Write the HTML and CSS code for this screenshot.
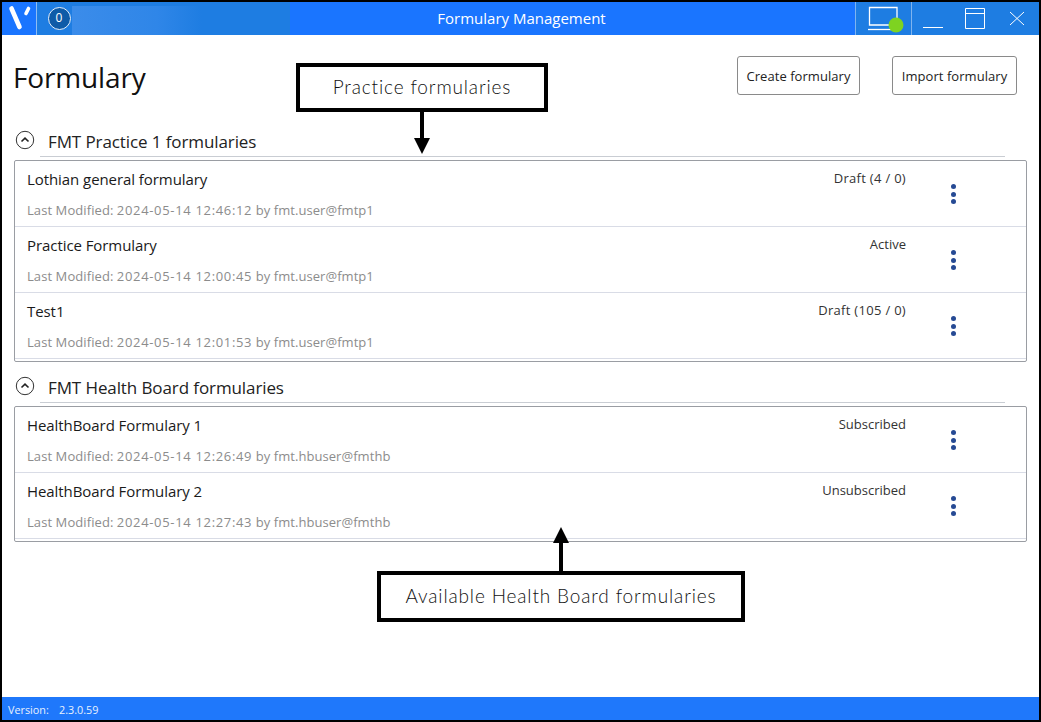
FILE: index.html
```html
<!DOCTYPE html>
<html lang="en">
<head>
<meta charset="utf-8">
<title>Formulary Management</title>
<link rel="stylesheet" href="styles.css">
</head>
<body>
<div class="window">
  <header class="titlebar">
    <div class="logo-cell">
      <svg width="30" height="30" viewBox="0 0 30 30"><path d="M9.5 5.5 L17.5 24" stroke="#fff" stroke-width="4.6" stroke-linecap="round" fill="none"/><path d="M26.5 5.5 L24 10.5" stroke="#fff" stroke-width="3.6" stroke-linecap="round" fill="none"/></svg>
    </div>
    <div class="glow"></div>
    <div class="badge-cell"><span class="badge">0</span></div>
    <div class="app-title">Formulary Management</div>
    <div class="status-cell">
      <svg width="40" height="33" viewBox="0 0 40 33"><path d="M4.5 5.5H32V23H4.5Z" fill="none" stroke="#fff" stroke-width="1.3"/><path d="M3 27.5H32" stroke="#fff" stroke-width="1.3"/><circle cx="31" cy="23" r="7.5" fill="#7ed321"/></svg>
    </div>
    <div class="win-controls">
      <svg width="22" height="33" viewBox="0 0 22 33"><path d="M1 25.5H21" stroke="#fff" stroke-width="1"/></svg>
      <svg width="22" height="33" viewBox="0 0 22 33"><path d="M1.5 6.5H20.5V26.5H1.5ZM1.5 11.5H20.5" fill="none" stroke="#fff" stroke-width="1"/></svg>
      <svg width="20" height="33" viewBox="0 0 20 33"><path d="M4 10L18 23M18 10L4 23" fill="none" stroke="#fff" stroke-width="1"/></svg>
    </div>
  </header>

  <main class="content">
    <div class="page-head">
      <h1>Formulary</h1>
      <div class="actions">
        <button class="btn">Create formulary</button>
        <button class="btn btn-wide">Import formulary</button>
      </div>
    </div>

    <section class="group">
      <div class="group-head">
        <svg class="chev" width="20" height="20" viewBox="0 0 20 20"><circle cx="10" cy="10" r="8.7" fill="none" stroke="#333" stroke-width="1"/><path d="M6.5 11.5L10 8.2L13.5 11.5" fill="none" stroke="#222" stroke-width="1.6"/></svg>
        <h2>FMT Practice 1 formularies</h2>
      </div>
      <div class="list">
        <div class="row">
          <div class="row-text"><div class="name">Lothian general formulary</div><div class="meta"><span class="meta-label">Last Modified:</span> <span class="stamp">2024-05-14 12:46:12</span> by fmt.user@fmtp1</div></div>
          <div class="state">Draft (4 / 0)</div>
          <div class="more"><i></i><i></i><i></i></div>
        </div>
        <div class="row">
          <div class="row-text"><div class="name">Practice Formulary</div><div class="meta"><span class="meta-label">Last Modified:</span> <span class="stamp">2024-05-14 12:00:45</span> by fmt.user@fmtp1</div></div>
          <div class="state state-word">Active</div>
          <div class="more"><i></i><i></i><i></i></div>
        </div>
        <div class="row">
          <div class="row-text"><div class="name">Test1</div><div class="meta"><span class="meta-label">Last Modified:</span> <span class="stamp">2024-05-14 12:01:53</span> by fmt.user@fmtp1</div></div>
          <div class="state">Draft (105 / 0)</div>
          <div class="more"><i></i><i></i><i></i></div>
        </div>
      </div>
    </section>

    <section class="group">
      <div class="group-head">
        <svg class="chev" width="20" height="20" viewBox="0 0 20 20"><circle cx="10" cy="10" r="8.7" fill="none" stroke="#333" stroke-width="1"/><path d="M6.5 11.5L10 8.2L13.5 11.5" fill="none" stroke="#222" stroke-width="1.6"/></svg>
        <h2>FMT Health Board formularies</h2>
      </div>
      <div class="list">
        <div class="row">
          <div class="row-text"><div class="name">HealthBoard Formulary 1</div><div class="meta"><span class="meta-label">Last Modified:</span> <span class="stamp">2024-05-14 12:26:49</span> by fmt.hbuser@fmthb</div></div>
          <div class="state state-word">Subscribed</div>
          <div class="more"><i></i><i></i><i></i></div>
        </div>
        <div class="row">
          <div class="row-text"><div class="name">HealthBoard Formulary 2</div><div class="meta"><span class="meta-label">Last Modified:</span> <span class="stamp">2024-05-14 12:27:43</span> by fmt.hbuser@fmthb</div></div>
          <div class="state state-word">Unsubscribed</div>
          <div class="more"><i></i><i></i><i></i></div>
        </div>
      </div>
    </section>

    <div class="callout callout-practice">Practice formularies</div>
    <svg class="arrow arrow-practice" width="16" height="44" viewBox="0 0 16 44"><path d="M8 0V30" stroke="#000" stroke-width="4"/><path d="M0 28H16L8 44Z" fill="#000"/></svg>
    <div class="callout callout-board">Available Health Board formularies</div>
    <svg class="arrow arrow-board" width="16" height="46" viewBox="0 0 16 46"><path d="M8 46V14" stroke="#000" stroke-width="4"/><path d="M0 16H16L8 0Z" fill="#000"/></svg>
  </main>

  <footer class="statusbar"><span class="ver-label">Version:</span><span>2.3.0.59</span></footer>
</div>
</body>
</html>
```
FILE: styles.css
```css
* { box-sizing: border-box; }
html, body { margin: 0; padding: 0; background: #fff; }
body { font-family: "Open Sans", "Noto Sans", "Liberation Sans", sans-serif; color: #1a1a1a; }

.window {
  width: 1041px; height: 722px;
  border: 2px solid #000;
  display: flex; flex-direction: column;
  overflow: hidden;
}

.titlebar {
  height: 33px; flex: none;
  background: #1a75ff;
  display: flex; align-items: stretch;
  position: relative;
  color: #fff;
}
.logo-cell {
  width: 35px; flex: none;
  border-right: 1px solid #8fbdf3;
  display: flex; align-items: center; justify-content: center;
}
.logo-cell svg { margin-left: -4px; margin-top: -2px; }
.badge-cell { width: 35px; flex: none; display: flex; align-items: center; justify-content: center; padding-left: 9px; position: relative; }
.badge {
  width: 23px; height: 23px; border-radius: 50%;
  background: #0f5ba8; border: 1.5px solid #e6f0fb;
  font-size: 12px; line-height: 20px; text-align: center; color: #fff;
}
.glow {
  position: absolute; left: 35px; top: 0; width: 253px; height: 33px;
  background: linear-gradient(180deg, #1e7de2 0, #1e7de2 4px, transparent 4px),
    linear-gradient(90deg, #1e7de2 0, #1e7de2 35px, #3b8cea 35px, #2f86e8 120px, #1e7de2 165px);
}
.app-title { position: absolute; left: 0; right: 0; top: 0; text-align: center; font-size: 15px; line-height: 33px; color: #fff; padding-left: 2px; }
.status-cell {
  margin-left: auto; width: 57px; flex: none;
  background: #1e7de2;
  border-left: 1px solid #7fb4ef; border-right: 1px solid #7fb4ef;
  display: flex; align-items: center; padding-left: 9px;
}
.win-controls { width: 127px; flex: none; display: flex; gap: 20px; padding-left: 10px; background: #1e7de2; }

.content { flex: 1; position: relative; padding: 0 12px; background: #fff; }

.page-head { height: 89px; display: flex; justify-content: space-between; }
h1 { margin: 0 0 0 -1px; font-size: 28px; font-weight: 400; line-height: 38px; padding-top: 23px; height: 61px; color: #111; letter-spacing: -0.15px; }
.actions { display: flex; gap: 32px; padding-top: 21px; margin-right: 10px; }
.btn {
  width: 123px; height: 39px; padding: 0;
  background: #fff; border: 1px solid #8a8a8a; border-radius: 3px;
  font: 13px "Open Sans", sans-serif; color: #222; letter-spacing: 0.05px;
}
.btn-wide { width: 125px; }

.group { margin-bottom: 8px; width: 1013px; }
.group-head { height: 36px; display: flex; align-items: center; position: relative; }
.group-head::after { content: ""; position: absolute; left: 26px; width: 965px; bottom: 3px; height: 1px; background: #c9cdd3; }
.chev { margin: 0 13px 4px 1px; }
.group-head h2 { margin: 0; font-size: 17px; font-weight: 400; line-height: 24px; color: #222; letter-spacing: -0.1px; }

.list { border: 1px solid #9a9da3; border-radius: 2px; padding-bottom: 2px; }
.row {
  height: 66px; display: flex; align-items: flex-start;
  border-bottom: 1px solid #d9dce6;
  padding-left: 12px;
}
.row-text { flex: 1; }
.name { font-size: 15px; line-height: 20px; padding-top: 8px; height: 28px; color: #1a1a1a; letter-spacing: -0.07px; }
.meta { font-size: 13px; line-height: 18px; margin-top: 12px; color: #8c8c8c; letter-spacing: 0.06px; }
.meta-label { letter-spacing: 0.08px; }
.stamp { letter-spacing: 0.67px; }
.state { font-size: 13px; line-height: 18px; padding-top: 8px; color: #333; text-align: right; margin-right: 37px; letter-spacing: 0.3px; }
.state-word { letter-spacing: 0; }
.more { width: 20px; margin-right: 63px; padding-top: 23px; display: flex; flex-direction: column; align-items: center; gap: 2.5px; }
.more i { width: 5px; height: 5px; border-radius: 50%; background: #264a94; display: block; }

.callout {
  position: absolute; background: #fff; border: 4px solid #000;
  font-family: "Lato", "Open Sans", sans-serif; font-weight: 300; color: #111; text-align: center;
  font-size: 19px; letter-spacing: 0.85px;
}
.callout-practice { left: 294px; top: 28px; width: 252px; height: 49px; line-height: 40px; }
.callout-board { left: 375px; top: 536px; width: 368px; height: 51px; line-height: 42px; }
.arrow { position: absolute; }
.arrow-practice { left: 412px; top: 75px; }
.arrow-board { left: 551px; top: 492px; }

.statusbar {
  height: 23px; flex: none;
  background: #1f78fb; color: #e8f1fd;
  font-size: 10.8px; line-height: 25px; padding-left: 6px;
  display: flex;
}
.ver-label { width: 51px; }
```
